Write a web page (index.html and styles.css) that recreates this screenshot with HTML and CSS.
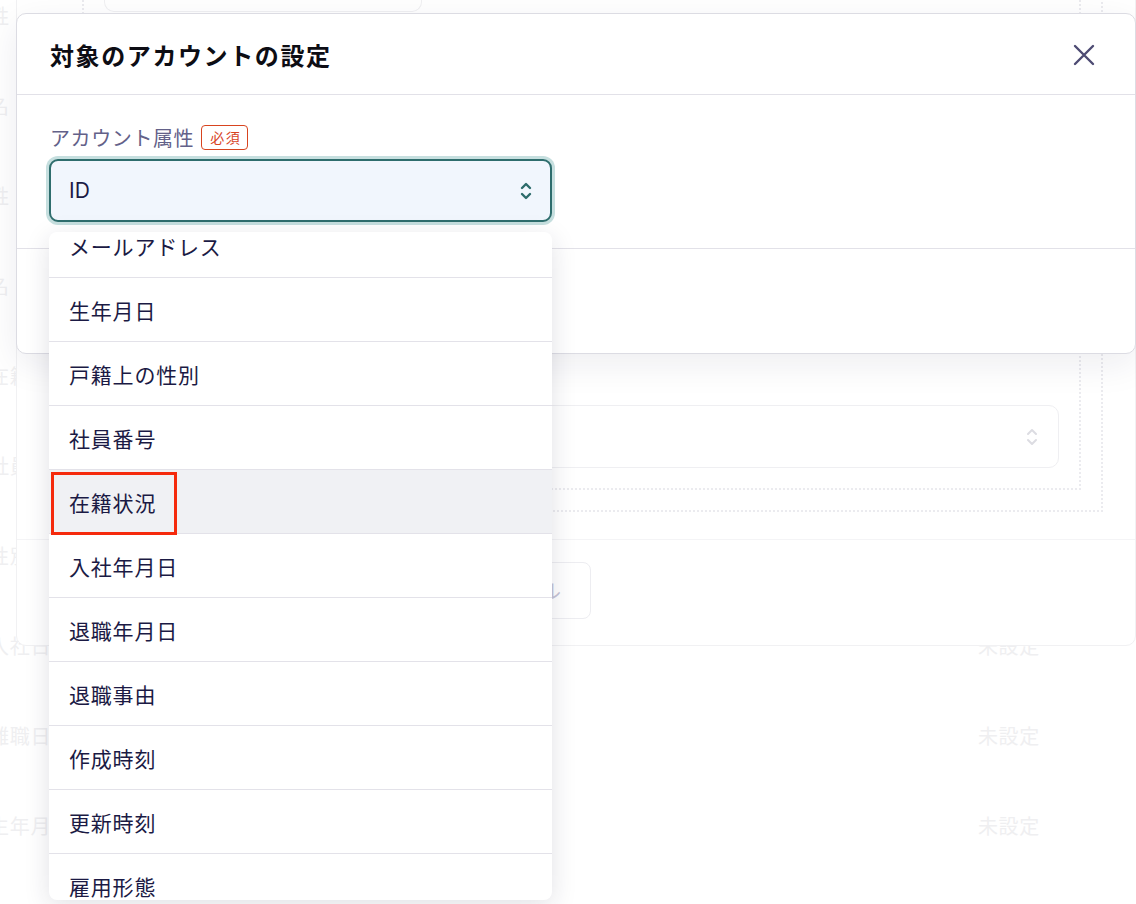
FILE: index.html
```html
<!DOCTYPE html>
<html lang="ja">

<head>
  <meta charset="utf-8">
  <meta content="width=device-width, initial-scale=1">
  <link rel="stylesheet" href="styles.css">
</head>

<body>
  <!-- page behind the dialogs -->
  <div class="page">
    <div class="row"><span class="row-label">姓</span><span class="row-value">未設定</span></div>
    <div class="row"><span class="row-label">名</span><span class="row-value">未設定</span></div>
    <div class="row"><span class="row-label">姓</span><span class="row-value">未設定</span></div>
    <div class="row"><span class="row-label">名</span><span class="row-value">未設定</span></div>
    <div class="row"><span class="row-label">在籍状況</span><span class="row-value">未設定</span></div>
    <div class="row"><span class="row-label">社員番号</span><span class="row-value">未設定</span></div>
    <div class="row"><span class="row-label">性別</span><span class="row-value">未設定</span></div>
    <div class="row"><span class="row-label">入社日</span><span class="row-value">未設定</span></div>
    <div class="row"><span class="row-label">離職日</span><span class="row-value">未設定</span></div>
    <div class="row"><span class="row-label">生年月日</span><span class="row-value">未設定</span></div>
  </div>

  <!-- first dialog (behind) -->
  <div class="modal modal-under">
    <div class="under-body">
      <div class="group-outer">
        <div class="group-inner">
          <div class="field-box"></div>
          <div class="under-select">
            <svg width="12" height="20" viewBox="0 0 12 20">
              <path d="M2 7 L6 3 L10 7 M2 13 L6 17 L10 13" fill="none" stroke="#dcdce2" stroke-width="2"
                stroke-linecap="round" stroke-linejoin="round" />
            </svg>
          </div>
        </div>
      </div>
    </div>
    <div class="under-footer">
      <button class="btn-ghost">キャンセル</button>
    </div>
  </div>

  <!-- second dialog (front) -->
  <div class="modal modal-top">
    <div class="modal-header">
      <h2 class="modal-title">対象のアカウントの設定</h2>
      <svg class="close" width="22" height="22" viewBox="0 0 22 22">
        <path d="M2 2 L20 20 M20 2 L2 20" fill="none" stroke="#4d4b73" stroke-width="2.4" stroke-linecap="round" />
      </svg>
    </div>
    <div class="modal-body">
      <div class="field-label">アカウント属性<span class="badge">必須</span></div>
      <div class="select">
        <span class="select-value">ID</span>
        <svg width="12" height="22" viewBox="0 0 12 22">
          <path d="M2 8 L6 4 L10 8 M2 14 L6 18 L10 14" fill="none" stroke="#2d6b6b" stroke-width="2.4"
            stroke-linecap="round" stroke-linejoin="round" />
        </svg>
      </div>
    </div>
    <div class="modal-footer"></div>
  </div>

  <!-- open list of the select -->
  <div class="dropdown">
    <ul class="options">
      <li>メールアドレス</li>
      <li>生年月日</li>
      <li>戸籍上の性別</li>
      <li>社員番号</li>
      <li class="hover">在籍状況</li>
      <li>入社年月日</li>
      <li>退職年月日</li>
      <li>退職事由</li>
      <li>作成時刻</li>
      <li>更新時刻</li>
      <li>雇用形態</li>
    </ul>
  </div>

  <div class="mark"></div>
</body>

</html>
```

FILE: styles.css
```css
* {
  box-sizing: border-box;
}

body {
  margin: 0;
  width: 1136px;
  height: 904px;
  overflow: hidden;
  position: relative;
  background: #fff;
  font-family: Inter, "Noto Sans CJK JP", sans-serif;
}

/* page behind */
.page {
  margin-top: -30px;
}

.row {
  height: 90px;
  display: flex;
  align-items: center;
  justify-content: space-between;
  padding-right: 96px;
  font-size: 20px;
  letter-spacing: 0.7px;
  color: #efeff1;
}

.row-label {
  margin-left: -11px;
}

/* dialogs */
.modal {
  position: absolute;
  left: 16px;
  width: 1120px;
  background: #fff;
  border-radius: 10px;
}

.modal-under {
  top: -100px;
  height: 746px;
  border: 1px solid #f1f1f3;
  display: flex;
  flex-direction: column;
}

.under-body {
  padding: 20px 32px 27px 43px;
}

.group-outer {
  border: 2px dotted #ebebef;
  border-left-color: transparent;
  padding: 20px;
}

.group-inner {
  border: 2px dotted #ebebef;
  padding: 20px;
  padding-top: 0;
}

.field-box {
  width: 318px;
  height: 67px;
  border: 1px solid #f0f0f2;
  border-top: none;
  border-radius: 0 0 10px 10px;
}

.under-select {
  margin-top: 393px;
  height: 63px;
  border: 1px solid #efeff2;
  border-radius: 10px;
  display: flex;
  align-items: center;
  justify-content: flex-end;
  padding-right: 20px;
}

.under-footer {
  border-top: 1px solid #f4f4f6;
  padding: 22px 544px 26px 33px;
  display: flex;
  justify-content: flex-end;
}

.btn-ghost {
  height: 57px;
  width: 160px;
  border: 1px solid #ededf1;
  border-radius: 8px;
  background: #fff;
  font-family: "Noto Sans CJK JP", sans-serif;
  font-size: 20px;
  color: #c6c4d6;
}

.modal-top {
  top: 13px;
  height: 341px;
  border: 1px solid #dcdce3;
  box-shadow: 0 10px 36px rgba(30, 30, 60, 0.08);
}

.modal-header {
  height: 81px;
  border-bottom: 1px solid #e2e1e8;
  display: flex;
  align-items: center;
  justify-content: space-between;
  padding: 0 40px 0 33px;
}

.modal-title {
  margin: 0;
  font-size: 24px;
  letter-spacing: 1.6px;
  font-weight: 700;
  color: #0d0d14;
}

.close {
  margin-top: 2px;
}

.modal-body {
  padding: 28px 32px 26px 32px;
  border-bottom: 1px solid #e2e1e8;
}

.field-label {
  display: flex;
  align-items: center;
  height: 28px;
  font-size: 20px;
  letter-spacing: 0.6px;
  color: #636189;
  margin-bottom: 8px;
  padding-left: 1px;
}

.badge {
  margin-left: 7px;
  border: 1px solid #d8441f;
  border-radius: 4px;
  color: #d8441f;
  font-size: 14px;
  letter-spacing: 1.5px;
  line-height: 23px;
  padding: 0 6px 0 8px;
}

.select {
  width: 503px;
  height: 63px;
  border: 2px solid #2e6d6d;
  border-radius: 9px;
  background: #f1f6fd;
  box-shadow: 0 0 0 3px #c6dfdf;
  display: flex;
  align-items: center;
  justify-content: space-between;
  padding: 0 18px 0 18px;
}

.select-value {
  font-size: 21px;
  color: #1b1a44;
}

/* open list */
.dropdown {
  position: absolute;
  left: 49px;
  top: 232px;
  width: 503px;
  height: 668px;
  background: #fff;
  border-radius: 8px;
  box-shadow: 0 6px 26px rgba(30, 30, 60, 0.13);
  overflow: hidden;
}

.options {
  list-style: none;
  margin: -18px 0 0;
  padding: 0;
}

.options li {
  height: 64px;
  border-bottom: 1px solid #e3e2e9;
  display: flex;
  align-items: center;
  padding-left: 20px;
  font-family: "Noto Sans CJK JP", sans-serif;
  font-size: 21px;
  letter-spacing: 0.8px;
  color: #1b1a44;
}

.options li.hover {
  background: #f0f1f4;
}

/* red annotation box */
.mark {
  position: absolute;
  left: 51px;
  top: 472px;
  width: 126px;
  height: 63px;
  border: 3px solid #f52a0c;
}
```
